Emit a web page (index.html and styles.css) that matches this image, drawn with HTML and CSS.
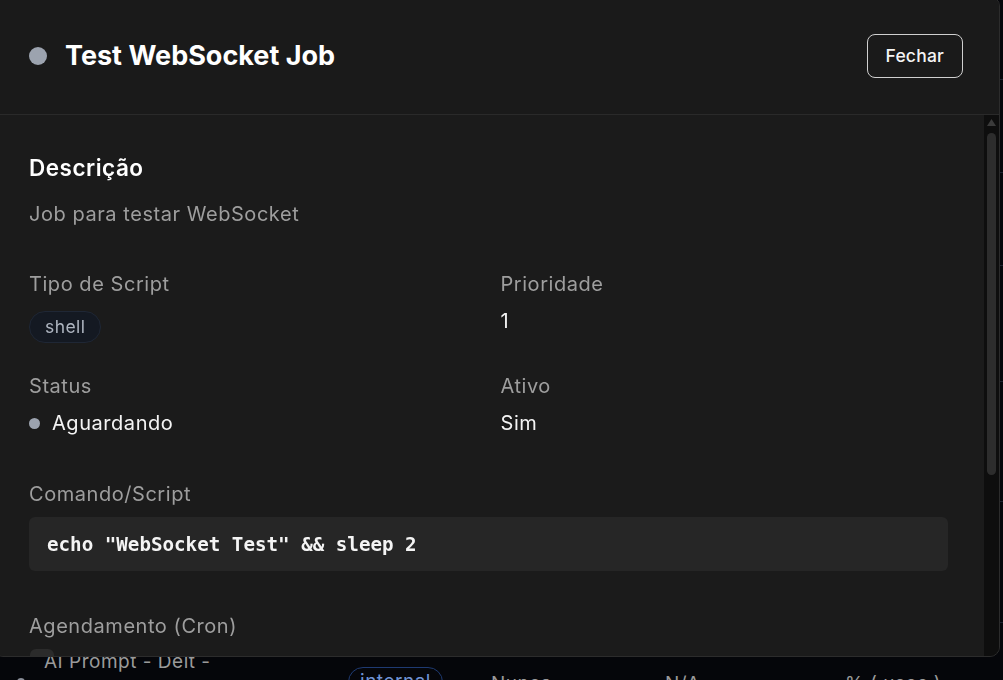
FILE: index.html
```html
<!DOCTYPE html>
<html lang="pt-BR">
<head>
<meta charset="utf-8">
<title>Test WebSocket Job</title>
<link rel="stylesheet" href="styles.css">
</head>
<body>
<div class="page">
  <div class="bg-table">
    <div class="bg-row h1"></div>
    <div class="bg-row h2"></div>
    <div class="bg-row h3"></div>
    <div class="bg-row h4"></div>
    <div class="bg-row h5"></div>
    <div class="bg-row h6"></div>
    <div class="bg-row last">
      <span class="bg-dot"></span>
      <div class="bg-name">AI Prompt - Deit -</div>
      <span class="bg-badge">internal</span>
      <span class="bg-cell c-nunca">Nunca</span>
      <span class="bg-cell c-na">N/A</span>
      <span class="bg-cell c-pct">% ( usos )</span>
    </div>
  </div>
</div>

<div class="modal" role="dialog" aria-labelledby="job-title">
  <header class="modal-header">
    <div class="title-wrap">
      <span class="status-dot large"></span>
      <h2 id="job-title" class="title">Test WebSocket Job</h2>
    </div>
    <button class="btn-close" type="button">Fechar</button>
  </header>

  <div class="modal-body">
    <div class="body-content">
      <section class="section">
        <h3 class="section-title">Descrição</h3>
        <p class="description">Job para testar WebSocket</p>
      </section>

      <div class="fields">
        <div class="field">
          <div class="label">Tipo de Script</div>
          <div class="value"><span class="badge">shell</span></div>
        </div>
        <div class="field">
          <div class="label">Prioridade</div>
          <div class="value">1</div>
        </div>
        <div class="field">
          <div class="label">Status</div>
          <div class="value status"><span class="status-dot small"></span>Aguardando</div>
        </div>
        <div class="field">
          <div class="label">Ativo</div>
          <div class="value">Sim</div>
        </div>
      </div>

      <section class="section command">
        <div class="label">Comando/Script</div>
        <pre class="code">echo "WebSocket Test" &amp;&amp; sleep 2</pre>
      </section>

      <section class="section cron">
        <div class="label">Agendamento (Cron)</div>
        <div class="cron-box"></div>
      </section>

      <div class="fields extra">
        <div class="field">
          <div class="label">Criado em</div>
          <div class="value">—</div>
        </div>
        <div class="field">
          <div class="label">Atualizado em</div>
          <div class="value">—</div>
        </div>
      </div>
    </div>

    <div class="scrollbar" aria-hidden="true">
      <svg class="scroll-arrow" width="9" height="7" viewBox="0 0 9 7"><polygon points="4.5,0 9,7 0,7" fill="#3b3b3b"/></svg>
      <div class="scroll-thumb"></div>
    </div>
  </div>
</div>
</body>
</html>
```

FILE: styles.css
```css
* { box-sizing: border-box; }

html, body {
  margin: 0;
  padding: 0;
  height: 100%;
  overflow: hidden;
}

body {
  background: #05060a;
  font-family: Inter, "Noto Sans", "Liberation Sans", sans-serif;
  color: #f2f2f2;
}

/* ---------- background page ---------- */
.page {
  height: 100%;
}

.bg-table {
  display: flex;
  flex-direction: column;
}

.bg-row {
  border-bottom: 1px solid #1f2430;
}
.bg-row.h1 { height: 80px; }
.bg-row.h2 { height: 93px; }
.bg-row.h3 { height: 93px; }
.bg-row.h4 { height: 116px; }
.bg-row.h5 { height: 120px; }
.bg-row.h6 { height: 121px; }

.bg-row.last {
  display: flex;
  align-items: flex-start;
  border-bottom: none;
  height: 120px;
  color: #9a9a9a;
  font-size: 19px;
  letter-spacing: 0.5px;
}

.bg-dot {
  width: 8px;
  height: 8px;
  border-radius: 50%;
  background: #8b8f99;
  margin: 55px 0 0 17px;
}

.bg-name {
  width: 304px;
  margin: 26px 0 0 19px;
  line-height: 26px;
}

.bg-badge {
  width: 95px;
  height: 30px;
  margin-top: 44px;
  border: 1px solid #1e3a72;
  border-radius: 15px;
  color: #6f93d6;
  text-align: center;
  line-height: 28px;
}

.bg-cell {
  margin-top: 48px;
  line-height: 26px;
}
.c-nunca { margin-left: 48px; width: 174px; }
.c-na { width: 180px; }

/* ---------- modal ---------- */
.modal {
  position: fixed;
  left: -7px;
  top: -4px;
  width: 1007px;
  height: 661px;
  display: flex;
  flex-direction: column;
  background: #1b1b1b;
  border: 1px solid #2c2c2c;
  border-radius: 10px;
  overflow: hidden;
}

.modal-header {
  flex: none;
  height: 118px;
  display: flex;
  align-items: center;
  justify-content: space-between;
  padding: 0 36px 0 35px;
  background: #1a1a1a;
  border-bottom: 1px solid #2a2a2a;
}

.title-wrap {
  display: flex;
  align-items: center;
  gap: 18px;
}

.status-dot {
  display: inline-block;
  border-radius: 50%;
  background: #9ca3af;
  flex: none;
}
.status-dot.large { width: 18px; height: 18px; }
.status-dot.small { width: 11px; height: 11px; }

.title {
  margin: 0;
  font-size: 27px;
  line-height: 36px;
  font-weight: 700;
  color: #ffffff;
}

.btn-close {
  height: 44px;
  padding: 0 18px;
  border: 1px solid #cfcfcf;
  border-radius: 8px;
  background: transparent;
  color: #f4f4f4;
  font-family: inherit;
  font-size: 17.5px;
  font-weight: 500;
  letter-spacing: 0.2px;
}

.modal-body {
  flex: 1;
  min-height: 0;
  display: flex;
  background: #1b1b1b;
}

.body-content {
  flex: 1;
  min-width: 0;
  overflow: hidden;
  padding: 38px 36px 0 35px;
}

.scrollbar {
  flex: none;
  width: 15px;
  background: #0e0e0e;
  display: flex;
  flex-direction: column;
  align-items: center;
}

.scroll-arrow {
  display: block;
  margin-top: 4px;
}

.scroll-thumb {
  width: 9px;
  height: 342px;
  margin-top: 7px;
  border-radius: 5px;
  background: #2d2d2d;
}

.section-title {
  margin: 0;
  font-size: 22.5px;
  line-height: 30px;
  font-weight: 600;
  letter-spacing: 0.5px;
  color: #ffffff;
}

.description {
  margin: 17px 0 0;
  font-size: 20px;
  line-height: 28px;
  letter-spacing: 0.55px;
  color: #9e9e9e;
}

.label {
  font-size: 20px;
  line-height: 28px;
  letter-spacing: 0.55px;
  color: #9e9e9e;
  margin-bottom: 9px;
}

.value {
  font-size: 20px;
  line-height: 28px;
  letter-spacing: 0.55px;
  color: #f4f4f4;
}

.fields {
  display: grid;
  grid-template-columns: 1fr 1fr;
  column-gap: 24px;
  row-gap: 29px;
  margin-top: 42px;
}

.badge {
  display: inline-flex;
  align-items: center;
  height: 32px;
  margin-top: 4px;
  padding: 0 15px;
  border: 1px solid #1f2735;
  border-radius: 16px;
  background: #141922;
  color: #aeb5c0;
  font-size: 17.5px;
  letter-spacing: 0.4px;
}

.status {
  display: flex;
  align-items: center;
  gap: 12px;
}

.command { margin-top: 43px; }

.code {
  margin: 0;
  padding: 17px 18px 15px;
  border-radius: 6px;
  background: #262626;
  color: #f4f4f4;
  font-family: "DejaVu Sans Mono", "Liberation Mono", monospace;
  font-size: 19.2px;
  line-height: 22px;
  font-weight: 700;
}

.cron { margin-top: 41px; }

.cron-box {
  width: 24px;
  height: 24px;
  margin-left: 1px;
  border-radius: 6px;
  background: #2b2b2b;
}

.fields.extra { margin-top: 42px; }
```
